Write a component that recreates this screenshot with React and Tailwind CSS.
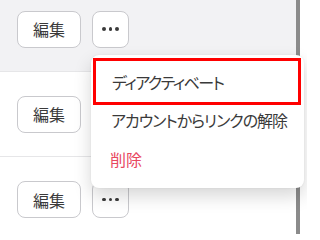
import React from "react";

const font = { fontFamily: '"Noto Sans CJK JP", "Noto Sans", sans-serif' };

const Dots = () => (
  <span className="flex items-center gap-[3px]">
    <span className="block w-[3.5px] h-[3.5px] rounded-full bg-[#3a3a3a]" />
    <span className="block w-[3.5px] h-[3.5px] rounded-full bg-[#3a3a3a]" />
    <span className="block w-[3.5px] h-[3.5px] rounded-full bg-[#3a3a3a]" />
  </span>
);

const Row = ({ active, last }) => (
  <div
    className={`h-[85px] flex items-center gap-[11px] pl-[17px] shrink-0 ${
      active ? "bg-[#f2f2f4]" : "bg-white"
    } ${last ? "" : "border-b border-[#e6e6e8]"}`}
  >
    <button className="w-[64px] h-[37px] flex items-center justify-center rounded-lg border border-[#c9c9cd] bg-white text-[16px] text-[#3a3a3a]">
      編集
    </button>
    <button className="w-[37px] h-[37px] flex items-center justify-center rounded-lg border border-[#c9c9cd] bg-white">
      <Dots />
    </button>
  </div>
);

export default function App() {
  return (
    <div className="relative w-[307px] h-[234px] overflow-hidden bg-white" style={font}>
      <div className="flex h-full">
        <div className="w-[296px] flex flex-col mt-[-13px]">
          <Row active />
          <Row />
          <Row last />
        </div>
        <div className="w-[4px] h-full bg-[#8b8b8b]" />
        <div className="flex-1 bg-white" />
      </div>

      <div className="absolute left-[91px] top-[55px] w-[213px] h-[133px] rounded-lg bg-white shadow-[0_8px_18px_rgba(0,0,0,0.16),0_0_2px_rgba(0,0,0,0.08)] text-[16px] text-[#3a3a3a] [font-feature-settings:'palt']">
        <div className="ml-[2px] mr-[3px] mt-[3px] h-[47px] border-[3.5px] border-[#ff0000] flex items-center pl-[16px] tracking-[-1.5px]">
          ディアクティベート
        </div>
        <div className="h-[30px] flex items-center pl-[20px] tracking-[-1px]">アカウントからリンクの解除</div>
        <div className="mt-[5px] h-[38px] flex items-center pl-[19px] text-[#e8475f]">削除</div>
      </div>
    </div>
  );
}
